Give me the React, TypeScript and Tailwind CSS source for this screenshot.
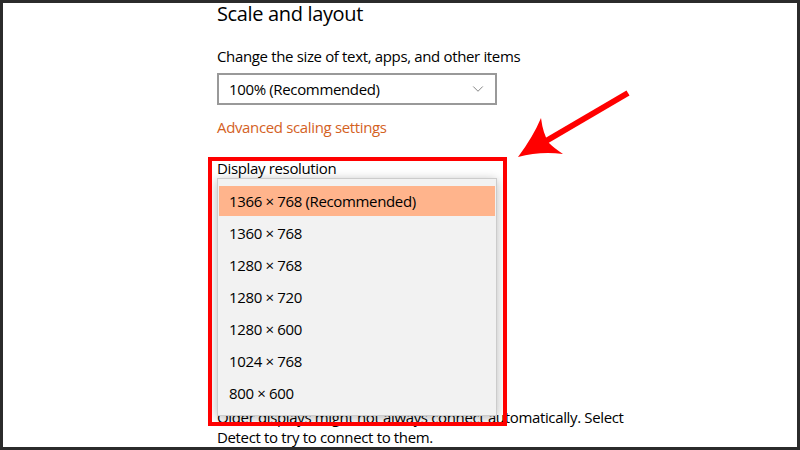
import { ChevronDown } from "lucide-react";

const RESOLUTIONS = [
  "1366 × 768 (Recommended)",
  "1360 × 768",
  "1280 × 768",
  "1280 × 720",
  "1280 × 600",
  "1024 × 768",
  "800 × 600",
];

function Arrow() {
  return (
    <svg
      className="absolute left-0 top-0"
      width={800}
      height={450}
      viewBox="3 3 800 450"
      aria-hidden
    >
      <line x1={628} y1={93} x2={546} y2={141} stroke="#ff0000" strokeWidth={6} />
      <path
        d="M518 157 Q533 137 541 118 Q543 134 549 143 Q554 148 563 154 Q540 151 518 157 Z"
        fill="#ff0000"
      />
    </svg>
  );
}

export default function App() {
  return (
    <div
      className="relative h-[450px] w-[800px] overflow-hidden border-[3px] border-[#2b2b2b] bg-white tracking-[-0.35px] text-black"
      style={{ fontFamily: '"Open Sans", "Noto Sans", sans-serif' }}
    >
      <div className="pl-[214px]">
        <h2 className="text-[20px] leading-[22px]">Scale and layout</h2>
        <p className="mt-[21px] text-[15px] leading-[20px]">
          Change the size of text, apps, and other items
        </p>
        <div className="mt-[7px] flex h-[32px] w-[280px] items-center justify-between border-2 border-[#999999] pl-[10px] pr-[8px] text-[15px]">
          <span>100% (Recommended)</span>
          <ChevronDown className="h-[18px] w-[18px] text-[#777]" strokeWidth={1.2} />
        </div>
        <p className="mt-[12px] text-[15px] leading-[20px] text-[#d4621f]">
          Advanced scaling settings
        </p>
        <p className="mt-[21px] text-[15px] leading-[20px]">Display resolution</p>
        <p className="mt-[229px] w-[420px] text-[15px] leading-[20px]">
          Older displays might not always connect automatically. Select Detect to try to
          connect to them.
        </p>
      </div>

      {/* open resolution list */}
      <div className="absolute left-[214px] top-[175px] h-[238px] w-[280px] border border-[#cccccc] bg-[#f2f2f2] pt-[6px] shadow-[0_2px_10px_rgba(0,0,0,0.28)]">
        {RESOLUTIONS.map((r, i) => (
          <div key={r} className="flex h-[32px] items-center px-px">
            <div
              className={`flex h-[30px] w-full items-center pl-[10px] text-[15px] ${
                i === 0 ? "bg-[#ffb48c]" : ""
              }`}
            >
              {r}
            </div>
          </div>
        ))}
      </div>

      {/* annotation */}
      <div className="absolute left-[205px] top-[154px] h-[269px] w-[299px] border-[4px] border-[#ff0000]" />
      <Arrow />
    </div>
  );
}
